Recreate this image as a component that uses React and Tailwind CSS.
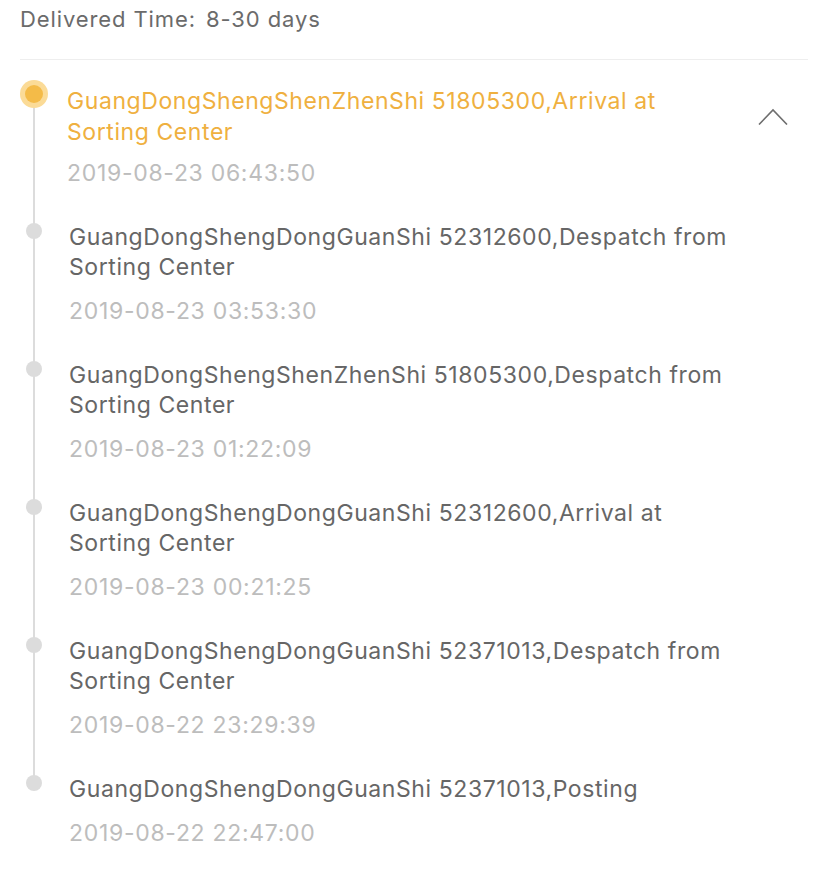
import React from "react";

const items = [
  { t: "GuangDongShengDongGuanShi 52312600,Despatch from Sorting Center", d: "2019-08-23 03:53:30" },
  { t: "GuangDongShengShenZhenShi 51805300,Despatch from Sorting Center", d: "2019-08-23 01:22:09" },
  { t: "GuangDongShengDongGuanShi 52312600,Arrival at Sorting Center", d: "2019-08-23 00:21:25" },
  { t: "GuangDongShengDongGuanShi 52371013,Despatch from Sorting Center", d: "2019-08-22 23:29:39" },
  { t: "GuangDongShengDongGuanShi 52371013,Posting", d: "2019-08-22 22:47:00", last: true },
];

export default function App() {
  return (
    <div className="w-[828px] h-[873px] bg-white px-5 overflow-hidden" style={{ fontFamily: 'Inter, "Liberation Sans", sans-serif' }}>
      <div className="pt-[5px] h-[60px] text-[22px] leading-[28px] tracking-[0.9px] text-[#6b6b6b] border-b border-[#eeeeee]">
        Delivered Time:<span className="ml-[10px]">8-30 days</span>
      </div>
      <div className="pt-[20px]">
        <div className="flex">
          <div className="relative w-[47px] shrink-0">
            <div className="absolute left-[13px] top-[14px] bottom-0 w-[2px] bg-[#dcdcdc]" />
            <div className="relative w-[28px] h-[28px] rounded-full bg-[#fbdb97] flex items-center justify-center">
              <div className="w-[18px] h-[18px] rounded-full bg-[#f4bb48]" />
            </div>
          </div>
          <div className="flex-1 pt-[6px] pb-[28px]">
            <div className="w-[664px] text-[23px] leading-[31px] tracking-[0.58px] text-[#efb040]">
              GuangDongShengShenZhenShi 51805300,Arrival at Sorting Center
            </div>
            <div className="mt-[10px] text-[23px] leading-[30px] tracking-[0.7px] text-[#bdbdbd]">2019-08-23 06:43:50</div>
          </div>
          <div className="w-[30px] mt-[28px] mr-[20px]">
            <svg width="30" height="17" viewBox="0 0 30 17" fill="none">
              <path d="M1 16.5 L15 2 L29 16.5" stroke="#6e6e6e" strokeWidth="1.6" />
            </svg>
          </div>
        </div>
        {items.map((it, i) => (
          <div key={i} className="flex">
            <div className="relative w-[49px] shrink-0">
              <div className={`absolute left-[13px] top-0 w-[2px] bg-[#dcdcdc] ${it.last ? "h-[15px]" : "bottom-0"}`} />
              <div className="absolute left-[6px] top-[7px] w-[16px] h-[16px] rounded-full bg-[#dcdcdc]" />
            </div>
            <div className="flex-1 pt-[6px] pb-[28px]">
              <div className="w-[664px] text-[23px] leading-[30px] tracking-[0.58px] text-[#666666]">{it.t}</div>
              <div className="mt-[14px] text-[23px] leading-[30px] tracking-[0.7px] text-[#bdbdbd]">{it.d}</div>
            </div>
          </div>
        ))}
      </div>
    </div>
  );
}
